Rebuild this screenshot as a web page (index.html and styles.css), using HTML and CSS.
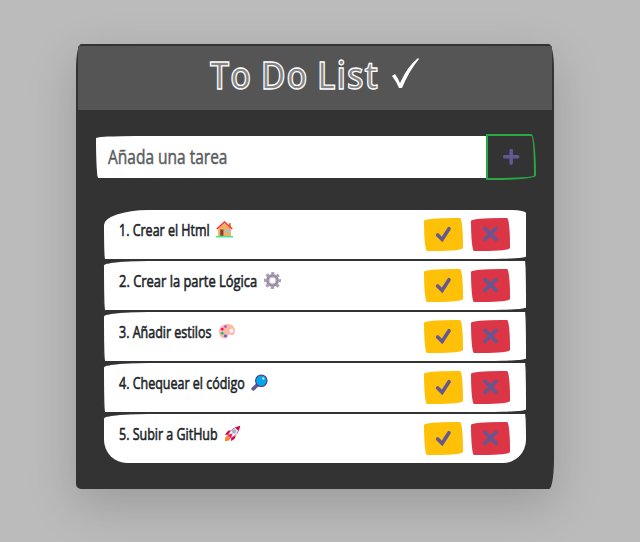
FILE: index.html
```html
<!DOCTYPE html>
<html lang="es">
<head>
<meta charset="utf-8">
<title>To Do List</title>
<link rel="stylesheet" href="styles.css">
</head>
<body>
<svg width="0" height="0" class="defs">
<symbol id="check" viewBox="0 0 16 16"><path d="M2.500 8.500L6.700 12.700L13.200 2.600" fill="none" stroke="#635894" stroke-width="3.4" stroke-linecap="round" stroke-linejoin="miter"/></symbol>
<symbol id="cross" viewBox="0 0 16 16"><path d="M2.700 2.200L13.300 12.800M13.300 2.200L2.700 12.800" fill="none" stroke="#635894" stroke-width="3.3" stroke-linecap="round"/></symbol>
</svg>
<main class="card">
<header class="head"><h1><span>To Do List</span><svg class="tick" viewBox="0 0 28 34"><path d="M1 19L4 17Q7 21 9 26Q16 10 27 1L28 2Q18 14 11 31L8 31Q5 24 1 19Z" fill="#fff"/></svg></h1></header>
<form class="entry">
<div class="field"><span>Añada una tarea</span></div>
<button type="button" class="add" aria-label="Añadir"><svg viewBox="0 0 16 16"><path d="M7.700 1.500V13.500M1.600 7.300H13.800" stroke="#635894" stroke-width="3.300" stroke-linecap="round"/></svg></button>
</form>
<ul class="list">
<li><p><span class="t w1">1. Crear el Html</span><svg class="emoji" viewBox="0 0 16 16"><path d="M2 7L8 2L14 7V14H2Z" fill="#f3ad61"/><path d="M12 2h2v4h-2z" fill="#d67d42"/><path d="M.7 7.5L8 1L15.3 7.5" fill="none" stroke="#f8312f" stroke-width="1.4"/><path d="M4 8h3v6H4z" fill="#7d4533"/><path d="M9 8h3v3H9z" fill="#83cbff"/><path d="M0 14h16v1.5H0z" fill="#44e58b"/></svg></p><div class="acts"><button class="done" aria-label="Completar"><svg><use href="#check"/></svg></button><button class="del" aria-label="Eliminar"><svg><use href="#cross"/></svg></button></div></li>
<li><p><span class="t w2">2. Crear la parte Lógica</span><svg class="emoji" viewBox="0 0 16 16"><circle cx="8" cy="8" r="4.5" fill="none" stroke="#998ea4" stroke-width="3.200"/><circle cx="8" cy="8" r="6.9" fill="none" stroke="#a79bb1" stroke-width="2.2" stroke-dasharray="2.9 2.52" stroke-dashoffset="1.45"/><circle cx="8" cy="8" r="3.3" fill="none" stroke="#cdc4d6" stroke-width=".8"/></svg></p><div class="acts"><button class="done" aria-label="Completar"><svg><use href="#check"/></svg></button><button class="del" aria-label="Eliminar"><svg><use href="#cross"/></svg></button></div></li>
<li><p><span class="t w3">3. Añadir estilos</span><svg class="emoji" viewBox="0 0 16 16"><path fill-rule="evenodd" d="M8 1C14 0 18 6 15 10.5C13 13 10 9 9.5 12C9 16 4 15 2 12C-1 7 2 2 8 1ZM12.6 5.5a1.8 1.8 0 1 0 .1 0Z" fill="#ffb8a6"/><circle cx="7" cy="3.4" r="1.3" fill="#8d65c5"/><circle cx="4" cy="5.8" r="1.3" fill="#f70a8d"/><circle cx="4" cy="9.7" r="1.3" fill="#00c878"/><circle cx="7" cy="12.2" r="1.3" fill="#4854f5"/></svg></p><div class="acts"><button class="done" aria-label="Completar"><svg><use href="#check"/></svg></button><button class="del" aria-label="Eliminar"><svg><use href="#cross"/></svg></button></div></li>
<li><p><span class="t w4">4. Chequear el código</span><svg class="emoji" viewBox="0 0 16 16"><path d="M2 14L6 10.2" stroke="#635994" stroke-width="3.4" stroke-linecap="round"/><circle cx="9.7" cy="6.3" r="5.4" fill="#00a6ed" stroke="#533566" stroke-width="1"/><circle cx="11.6" cy="4.2" r="1.1" fill="#b7e8ff"/></svg></p><div class="acts"><button class="done" aria-label="Completar"><svg><use href="#check"/></svg></button><button class="del" aria-label="Eliminar"><svg><use href="#cross"/></svg></button></div></li>
<li><p><span class="t w5">5. Subir a GitHub</span><svg class="emoji" viewBox="0 0 16 16"><path d="M1 15Q.5 11 3 10L6 13Q5 15.500 1 15Z" fill="#ff822d"/><path d="M6 5Q3 5 1 9.500L5 9ZM11 10Q11 13 6.500 15L7 11Z" fill="#ca0b4a"/><path d="M3.500 10Q6 3 14.800 1.200Q14 9 6.300 12.500Z" fill="#f4edf7" stroke="#c83c78" stroke-width=".7"/><path d="M10.500 2.500L15.300.7L13.500 5.700Z" fill="#ca0b4a"/><circle cx="9.500" cy="6" r="1.6" fill="#7cc7f5" stroke="#9b9b9b" stroke-width=".6"/><path d="M3.500 9.500L6.500 12.500L8 8Z" fill="#f8134f"/></svg></p><div class="acts"><button class="done" aria-label="Completar"><svg><use href="#check"/></svg></button><button class="del" aria-label="Eliminar"><svg><use href="#cross"/></svg></button></div></li>
</ul>
</main>
</body>
</html>
```
FILE: styles.css
```css
* { box-sizing: border-box; }
body { margin: 0; min-height: 542px; background: #bbb; color: #212529; font-family: "Open Sans", sans-serif; overflow: hidden; }
.defs { display: block; }
.card { width: 478px; height: 445px; margin: 44px 0 0 76px; background: #333; border: 2px solid #333; border-radius: 5px 5px 5px 5px / 25px 25px 30px 5px; box-shadow: 0 16px 48px rgba(0,0,0,.175); }
.head { height: 64px; background: #555; }
h1 { display: flex; margin: 0; padding: 11px 0 0 132px; color: #858585; font: 600 37px/36px "Open Sans", sans-serif; -webkit-text-stroke: 1.3px #fff; }
h1 span { width: 181px; white-space: nowrap; letter-spacing: 1px; word-spacing: -1px; transform-origin: 0 50%; transform: scaleX(.92); }
.tick { width: 28px; height: 34px; }
.entry { display: flex; margin: 24px 0 0 16px; }
.field { width: 394px; height: 46px; padding: 9px 12px; background: #fff; border: 2px solid #333; border-radius: 255px 0 0 25px / 25px 0 0 255px; color: #595c5f; font-size: 20px; line-height: 24px; }
.field span { display: inline-block; white-space: nowrap; transform-origin: 0 50%; transform: scaleX(.775); -webkit-text-stroke: .5px; }
.add { display: grid; place-items: center; width: 50px; height: 46px; margin-left: -2px; padding: 0; background: transparent; border: 2px solid #28a745; border-radius: 0 25px 225px 0 / 0 225px 25px 0; }
.add svg { width: 17px; height: 17px; }
.list { width: 426px; margin: 28px 0 0 24px; padding: 0; list-style: none; }
li { display: flex; justify-content: space-between; height: 51px; padding: 8px 16px 0 15px; background: #fff; border: 2px solid #333; border-top: 0; border-radius: 46px 3px 41px 3px / 4.6px 41px 4.6px 46px; }
li:first-child { height: 53px; border-top: 2px solid #333; border-radius: 46px 16px 41px 3px / 17px 5px 4.6px 36px; }
li:last-child { border-radius: 46px 3px 25px 25px / 4.6px 26px 25px 25px; }
p { display: flex; gap: 7px; height: 24px; margin: 0; font-size: 16px; line-height: 24px; }
.t { white-space: nowrap; transform-origin: 0 50%; transform: scaleX(.78); -webkit-text-stroke: .6px; }
.w1 { width: 90px; }
.w2 { width: 138px; transform: scaleX(.808); }
.w3 { width: 92px; }
.w4 { width: 125px; }
.w5 { width: 98px; }
.emoji { width: 17px; height: 17px; margin-top: 3px; }
.acts { display: flex; gap: 8px; }
.acts button { display: grid; place-items: center; width: 39px; height: 33px; padding: 0; border: 0; border-radius: 255px 25px 225px 25px / 25px 225px 25px 255px; }
.done { background: #ffc107; }
.del { background: #dc3545; }
.acts svg { width: 17px; height: 17px; }
```
